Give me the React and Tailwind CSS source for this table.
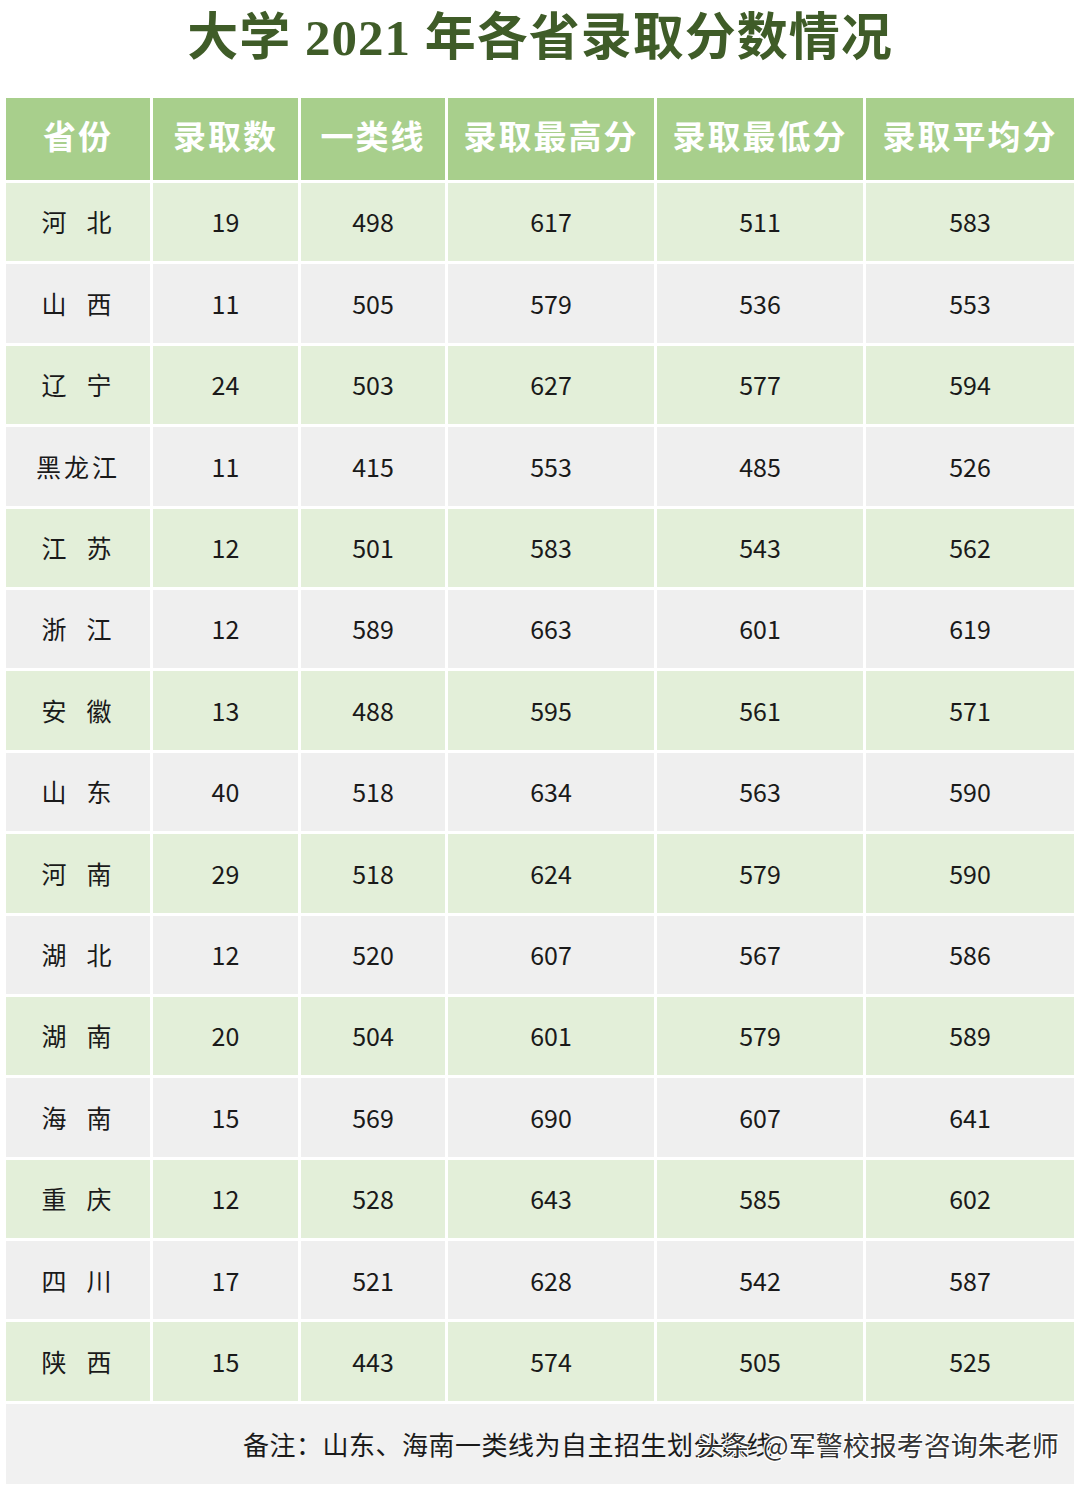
import React from "react";

const rows = [
  ["河 北", "19", "498", "617", "511", "583"],
  ["山 西", "11", "505", "579", "536", "553"],
  ["辽 宁", "24", "503", "627", "577", "594"],
  ["黑龙江", "11", "415", "553", "485", "526"],
  ["江 苏", "12", "501", "583", "543", "562"],
  ["浙 江", "12", "589", "663", "601", "619"],
  ["安 徽", "13", "488", "595", "561", "571"],
  ["山 东", "40", "518", "634", "563", "590"],
  ["河 南", "29", "518", "624", "579", "590"],
  ["湖 北", "12", "520", "607", "567", "586"],
  ["湖 南", "20", "504", "601", "579", "589"],
  ["海 南", "15", "569", "690", "607", "641"],
  ["重 庆", "12", "528", "643", "585", "602"],
  ["四 川", "17", "521", "628", "542", "587"],
  ["陕 西", "15", "443", "574", "505", "525"],
];

const headers = ["省份", "录取数", "一类线", "录取最高分", "录取最低分", "录取平均分"];

const sans = { fontFamily: '"Noto Sans CJK SC", "Noto Sans", sans-serif' };
const serif = { fontFamily: '"Liberation Serif", "Noto Sans CJK SC", serif' };

export default function App() {
  return (
    <div className="w-[1080px] h-[1492px] bg-white overflow-hidden">
      <div
        className="h-[98px] flex items-start justify-center pt-[6px] text-[51px] font-bold text-[#3f5c28] leading-[64px] tracking-[1px]"
        style={serif}
      >
        大学 2021 年各省录取分数情况
      </div>
      <div className="ml-[6px] w-[1068px] flex flex-col gap-[3px]">
        <div className="grid grid-cols-[144px_145px_144px_206px_206px_208px] gap-x-[3px] h-[82px]">
          {headers.map((h) => (
            <div
              key={h}
              className="bg-[#a8cf8c] flex items-center justify-center text-white text-[33px] font-bold tracking-[2px]"
              style={serif}
            >
              {h}
            </div>
          ))}
        </div>
        {rows.map((r, i) => (
          <div
            key={i}
            className="grid grid-cols-[144px_145px_144px_206px_206px_208px] gap-x-[3px] h-[78.4px]"
          >
            {r.map((c, j) => (
              <div
                key={j}
                className={
                  (i % 2 === 0 ? "bg-[#e3efd9]" : "bg-[#efefef]") +
                  " flex items-center justify-center text-[#1a1a1a] text-[25px]" +
                  (j === 0 ? " whitespace-pre tracking-[3px]" : "")
                }
                style={sans}
              >
                {j === 0 ? c.replace(" ", "  ") : c}
              </div>
            ))}
          </div>
        ))}
        <div className="relative h-[80px] bg-[#f1f1f1] flex items-center" style={sans}>
          <span className="ml-[237px] text-[26px] text-[#1a1a1a] tracking-[0.5px]">
            备注：山东、海南一类线为自主招生划分数线
          </span>
          <span
            className="absolute left-[691px] top-[26px] text-[27px] text-[#333333] leading-[30px] whitespace-pre"
            style={{ textShadow: "1px 1px 0 #fff, -1px -1px 0 #fff, 1px -1px 0 #fff, -1px 1px 0 #fff" }}
          >
            {"头条  @军警校报考咨询朱老师"}
          </span>
        </div>
      </div>
    </div>
  );
}
